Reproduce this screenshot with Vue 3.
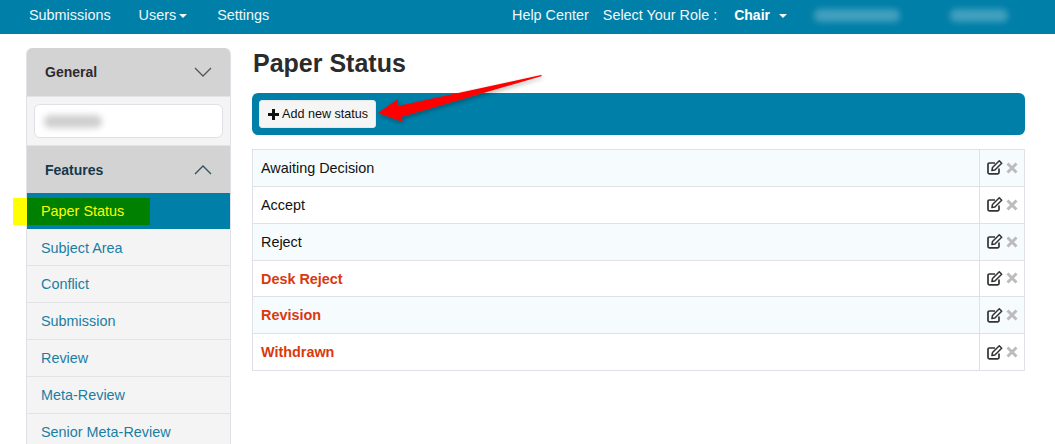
<script setup>
const items = ['Subject Area', 'Conflict', 'Submission', 'Review', 'Meta-Review', 'Senior Meta-Review']
const rows = [
  { name: 'Awaiting Decision', sys: false },
  { name: 'Accept', sys: false },
  { name: 'Reject', sys: false },
  { name: 'Desk Reject', sys: true },
  { name: 'Revision', sys: true },
  { name: 'Withdrawn', sys: true }
]
</script>

<template>
  <div class="page">
    <header class="nav">
      <div class="nav-left">
        <span>Submissions</span>
        <span class="users">Users<i class="caret"></i></span>
        <span>Settings</span>
      </div>
      <div class="nav-right">
        <span>Help Center</span>
        <span class="role">Select Your Role :</span>
        <b class="chair">Chair<i class="caret"></i></b>
        <span class="blob blob-a"></span>
        <span class="blob blob-b"></span>
      </div>
    </header>
    <div class="body">
      <aside class="side">
        <div class="acc-head">
          <b>General</b>
          <svg width="18" height="10" viewBox="0 0 18 10"><path d="M1 1l8 8 8-8" fill="none" stroke="#555" stroke-width="1.3"/></svg>
        </div>
        <div class="acc-search">
          <div class="fake-input"><span class="blob blob-c"></span></div>
        </div>
        <div class="acc-head second">
          <b class="teal">Features</b>
          <svg width="18" height="10" viewBox="0 0 18 10"><path d="M1 9l8-8 8 8" fill="none" stroke="#34505c" stroke-width="1.3"/></svg>
        </div>
        <div class="active">
          <span class="yellow"></span>
          <span class="green">Paper Status</span>
        </div>
        <a v-for="i in items" :key="i" class="item">{{ i }}</a>
      </aside>
      <main class="main">
        <h1>Paper Status</h1>
        <div class="bar">
          <button class="add"><span class="plus"></span>Add new status</button>
          <svg class="arrow" width="175" height="60" viewBox="0 0 175 60">
            <defs>
              <filter id="sh" x="-10%" y="-30%" width="120%" height="170%">
                <feDropShadow dx="1" dy="2" stdDeviation="2" flood-color="#000" flood-opacity=".3"/>
              </filter>
            </defs>
            <path d="M2 39 L22 25 L22 32 L165 1 L166 2 L25 43 L27 48 Z" fill="#f00" filter="url(#sh)"/>
          </svg>
        </div>
        <div class="table">
          <div v-for="(r, n) in rows" :key="r.name" class="row" :class="{ odd: n % 2 === 0 }">
            <div class="name" :class="{ sys: r.sys }">{{ r.name }}</div>
            <div class="acts">
              <svg width="16" height="15" viewBox="0 0 16 15">
                <path d="M12 8.500v4a1.300 1.300 0 0 1-1.300 1.300H2.300A1.300 1.300 0 0 1 1 12.500V4.300A1.300 1.300 0 0 1 2.300 3H8" fill="none" stroke="#333" stroke-width="1.700"/>
                <path d="M5.500 7.500L12.300 .8l2.400 2.400-6.800 6.800-3 .6z" fill="none" stroke="#333" stroke-width="1.500" stroke-linejoin="round"/>
              </svg>
              <svg width="12" height="12" viewBox="0 0 12 12">
                <path d="M1.500 1.500l9 9M10.500 1.500l-9 9" stroke="#bcbcbc" stroke-width="3"/>
              </svg>
            </div>
          </div>
        </div>
      </main>
    </div>
  </div>
</template>

<style>
html, body { margin: 0; overflow: hidden; background: #fff; }
</style>

<style scoped>
.page {
  width: 1055px;
  height: 444px;
  overflow: hidden;
  font-family: "Liberation Sans", Arial, sans-serif;
  font-size: 14.4px;
  color: #222;
}
.nav {
  height: 34px;
  background: #007fa8;
  color: #f2f8fa;
  display: flex;
  justify-content: space-between;
  align-items: center;
  padding: 0 0 4px 29px;
  box-sizing: border-box;
}
.nav-left { display: flex; gap: 29px; }
.users { margin-left: -1px; margin-right: 1px; }
.nav-right { display: flex; align-items: center; width: 543px; }
.role { margin-left: 14px; }
.chair { margin-left: 17px; font-size: 14px; color: #fff; }
.caret {
  display: inline-block;
  vertical-align: middle;
  margin-left: 3px;
  border-top: 4px solid #f2f8fa;
  border-left: 4px solid transparent;
  border-right: 4px solid transparent;
}
.chair .caret { margin-left: 9px; }
.blob {
  display: block;
  height: 13px;
  border-radius: 6px;
  background: rgba(255, 255, 255, .26);
  filter: blur(3px);
}
.blob-a { width: 86px; margin-left: 27px; }
.blob-b { width: 58px; margin-left: 50px; }
.blob-c { width: 58px; background: #cfcfcf; }
.body { display: flex; align-items: flex-start; padding: 14px 30px 0 26px; }
.side {
  width: 203px;
  border: 1px solid #dfe1e6;
  border-bottom: 0;
  border-radius: 6px 6px 0 0;
  background: #f4f4f5;
  flex: none;
}
.acc-head {
  height: 48px;
  margin-top: -1px;
  background: #d3d3d3;
  border-radius: 6px 6px 0 0;
  display: flex;
  align-items: center;
  justify-content: space-between;
  padding: 0 18px;
  font-size: 14px;
  color: #2b2b33;
}
.acc-head.second { border-radius: 0; margin-top: 0; height: 47px; }
.teal { color: #15384a; }
.acc-search {
  height: 50px;
  box-sizing: border-box;
  padding: 7px 7px 0;
  border-top: 1px solid #e2e3e6;
  border-bottom: 1px solid #e2e3e6;
}
.fake-input {
  height: 34px;
  box-sizing: border-box;
  background: #fff;
  border: 1px solid #dfe1e6;
  border-radius: 6px;
  padding: 0 9px;
  display: flex;
  align-items: center;
}
.active {
  position: relative;
  height: 36px;
  background: #007fa8;
}
.yellow {
  position: absolute;
  left: -14px;
  top: 5px;
  width: 14px;
  height: 27px;
  background: #ff0;
}
.green {
  position: absolute;
  left: 0;
  top: 5px;
  width: 109px;
  height: 27px;
  padding-left: 14px;
  line-height: 27px;
  background: #008000;
  color: #ff0;
}
.item {
  display: block;
  height: 36px;
  line-height: 37px;
  padding-left: 14px;
  color: #1a7ea3;
  border-bottom: 1px solid #e2e3e6;
}
.item:first-of-type { line-height: 38px; }
.main { flex: 1; margin-left: 21px; min-width: 0; }
h1 {
  margin: 0 0 14px;
  height: 31px;
  line-height: 31px;
  font-size: 25px;
  font-weight: 700;
  color: #2b2b2b;
  padding-left: 1px;
}
.bar {
  position: relative;
  height: 42px;
  box-sizing: border-box;
  background: #007fa8;
  border-radius: 6px;
  padding: 7px;
  margin-bottom: 14px;
}
.add {
  display: flex;
  align-items: center;
  width: 117px;
  height: 28px;
  padding: 0 0 0 8px;
  border: 1px solid #e8e8e8;
  border-radius: 3px;
  background: #f5f5f5;
  font: 12.6px "Liberation Sans", Arial, sans-serif;
  color: #111;
  white-space: nowrap;
}
.plus {
  flex: none;
  width: 11px;
  height: 11px;
  margin-right: 3px;
  background:
    linear-gradient(#111, #111) center / 100% 3px no-repeat,
    linear-gradient(#111, #111) center / 3px 100% no-repeat;
}
.arrow { position: absolute; left: 124px; top: -19px; }
.table { border: 1px solid #dfe1e6; border-bottom: 0; }
.row {
  display: flex;
  height: 36.85px;
  box-sizing: border-box;
  border-bottom: 1px solid #dfe1e6;
  background: #fff;
}
.row.odd { background: #f6fbfe; }
.name {
  flex: 1;
  line-height: 36px;
  padding-left: 8px;
  color: #111;
}
.name.sys { color: #d9390b; font-weight: 700; }
.acts {
  width: 45px;
  border-left: 1px solid #dfe1e6;
  display: flex;
  align-items: center;
  gap: 3px;
  padding-left: 7px;
  box-sizing: border-box;
}
</style>
